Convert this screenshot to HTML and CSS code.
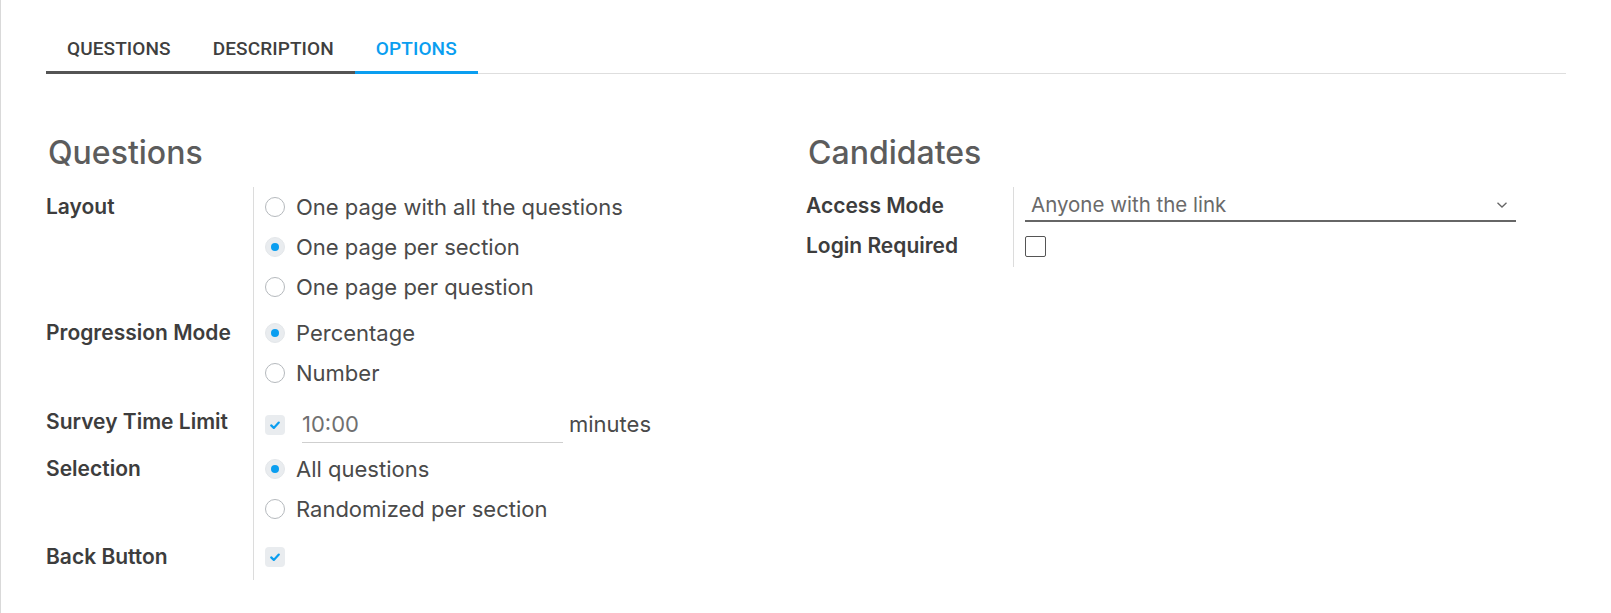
FILE: index.html
```html
<!DOCTYPE html>
<html lang="en">
<head>
<meta charset="utf-8">
<title>Survey Options</title>
<link rel="stylesheet" href="styles.css">
</head>
<body>
<div class="page">
  <div class="sheet">
    <nav class="tabs">
      <a class="tab tab-dark">QUESTIONS</a>
      <a class="tab tab-dark">DESCRIPTION</a>
      <a class="tab tab-active">OPTIONS</a>
    </nav>

    <div class="groups">
      <section class="group">
        <h2 class="group-title">Questions</h2>
        <div class="fields">
          <div class="label">Layout</div>
          <div class="value">
            <div class="option"><span class="radio"></span><span>One page with all the questions</span></div>
            <div class="option"><span class="radio checked"></span><span>One page per section</span></div>
            <div class="option"><span class="radio"></span><span>One page per question</span></div>
          </div>

          <div class="label">Progression Mode</div>
          <div class="value">
            <div class="option"><span class="radio checked"></span><span>Percentage</span></div>
            <div class="option"><span class="radio"></span><span>Number</span></div>
          </div>

          <div class="label label-time">Survey Time Limit</div>
          <div class="value">
            <div class="time-row">
              <span class="check checked"><svg viewBox="0 0 20 20" width="20" height="20"><path d="M6.2 10.4 L8.8 12.9 L13.8 7.6" fill="none" stroke="#0a9ef0" stroke-width="2.2" stroke-linecap="round" stroke-linejoin="round"/></svg></span>
              <span class="text-input">10:00</span>
              <span class="unit">minutes</span>
            </div>
          </div>

          <div class="label">Selection</div>
          <div class="value">
            <div class="option"><span class="radio checked"></span><span>All questions</span></div>
            <div class="option"><span class="radio"></span><span>Randomized per section</span></div>
          </div>

          <div class="label label-back">Back Button</div>
          <div class="value value-last">
            <div class="option option-back"><span class="check checked"><svg viewBox="0 0 20 20" width="20" height="20"><path d="M6.2 10.4 L8.8 12.9 L13.8 7.6" fill="none" stroke="#0a9ef0" stroke-width="2.2" stroke-linecap="round" stroke-linejoin="round"/></svg></span></div>
          </div>
        </div>
      </section>

      <section class="group">
        <h2 class="group-title">Candidates</h2>
        <div class="fields">
          <div class="label label-access">Access Mode</div>
          <div class="value value-access">
            <div class="select">
              <span>Anyone with the link</span>
              <svg class="chevron" viewBox="0 0 12 8" width="12" height="8"><path d="M1.5 1.8 L6 6 L10.5 1.8" fill="none" stroke="#666" stroke-width="1.3"/></svg>
            </div>
          </div>

          <div class="label">Login Required</div>
          <div class="value value-login">
            <div class="option"><span class="check empty"></span></div>
          </div>
        </div>
      </section>
    </div>
  </div>
</div>
</body>
</html>
```

FILE: styles.css
```css
html, body {
  margin: 0;
  padding: 0;
  background: #ffffff;
}

body {
  font-family: Inter, "Noto Sans", sans-serif;
  color: #4a4a4a;
  font-size: 22px;
}

.page {
  min-height: 613px;
  border-left: 1px solid #d9d9d9;
  box-sizing: border-box;
}

.sheet {
  padding: 27px 45px 0 45px;
}

/* Tabs */
.tabs {
  display: flex;
  border-bottom: 1px solid #dedede;
}

.tab {
  font-family: Roboto, "Liberation Sans", sans-serif;
  font-weight: 500;
  font-size: 19px;
  line-height: 24px;
  color: #3f3f3f;
  padding: 10px 21px 10px 21px;
  border-bottom: 3px solid transparent;
  margin-bottom: -1px;
  text-decoration: none;
  letter-spacing: 0.1px;
}

.tab-dark {
  border-bottom-color: #545454;
}

.tab-active {
  color: #0a9ef0;
  border-bottom-color: #0a9ef0;
}

/* Groups */
.groups {
  display: grid;
  grid-template-columns: 1fr 1fr;
  margin-top: 60px;
}

.group-title {
  margin: 0 0 15px 2px;
  font-size: 32px;
  line-height: 38px;
  font-weight: 500;
  color: #5c5c5c;
}

.fields {
  display: grid;
  grid-template-columns: 207px 1fr;
}

.label {
  font-weight: 600;
  font-size: 21px;
  color: #3d3d3d;
  line-height: 40px;
}

.label-time {
  padding-top: 3px;
}

.label-back {
  padding-top: 2px;
}

.value {
  border-left: 1px solid #dcdcdc;
  padding: 0 0 6px 11px;
}

.value-last {
  padding-bottom: 3px;
}

.option {
  display: flex;
  align-items: center;
  height: 40px;
  gap: 11px;
}

.option-back {
  padding-top: 2px;
}

.radio {
  width: 20px;
  height: 20px;
  box-sizing: border-box;
  border: 1px solid #b5b9bd;
  border-radius: 50%;
  background: #fff;
  display: flex;
  align-items: center;
  justify-content: center;
  flex: none;
}

.radio.checked {
  background: #e9ecef;
  border-color: #e4e7ea;
}

.radio.checked::after {
  content: "";
  width: 8px;
  height: 8px;
  border-radius: 50%;
  background: #0a9ef0;
}

.check {
  width: 20px;
  height: 20px;
  box-sizing: border-box;
  border-radius: 4px;
  flex: none;
  display: block;
}

.check svg {
  display: block;
}

.check.checked {
  background: #e9ecef;
}

.check.empty {
  width: 21px;
  height: 21px;
  border: 1px solid #555;
  border-radius: 2px;
  background: #fff;
}

/* time limit */
.time-row {
  display: flex;
  align-items: flex-start;
  height: 44px;
}

.time-row .check {
  margin-top: 16px;
}

.text-input {
  width: 261px;
  height: 44px;
  box-sizing: border-box;
  margin-left: 17px;
  padding-top: 12px;
  line-height: 26px;
  border-bottom: 1px solid #cfcfcf;
  color: #707070;
}

.unit {
  margin-left: 6px;
  padding-top: 12px;
  line-height: 26px;
  color: #4a4a4a;
}

/* access select */
.label-access {
  line-height: 38px;
}

.value-access {
  padding-top: 0;
  padding-bottom: 4px;
}

.select {
  width: 481px;
  height: 33px;
  box-sizing: content-box;
  border-bottom: 2px solid #666;
  display: flex;
  align-items: center;
  justify-content: space-between;
  padding: 0 4px 0 6px;
  color: #6a6a6a;
  font-size: 20.5px;
}

.select span {
  padding-top: 1px;
}

.chevron {
  margin-right: 4px;
  margin-top: 2px;
}

.value-login {
  padding-bottom: 1px;
}
```
